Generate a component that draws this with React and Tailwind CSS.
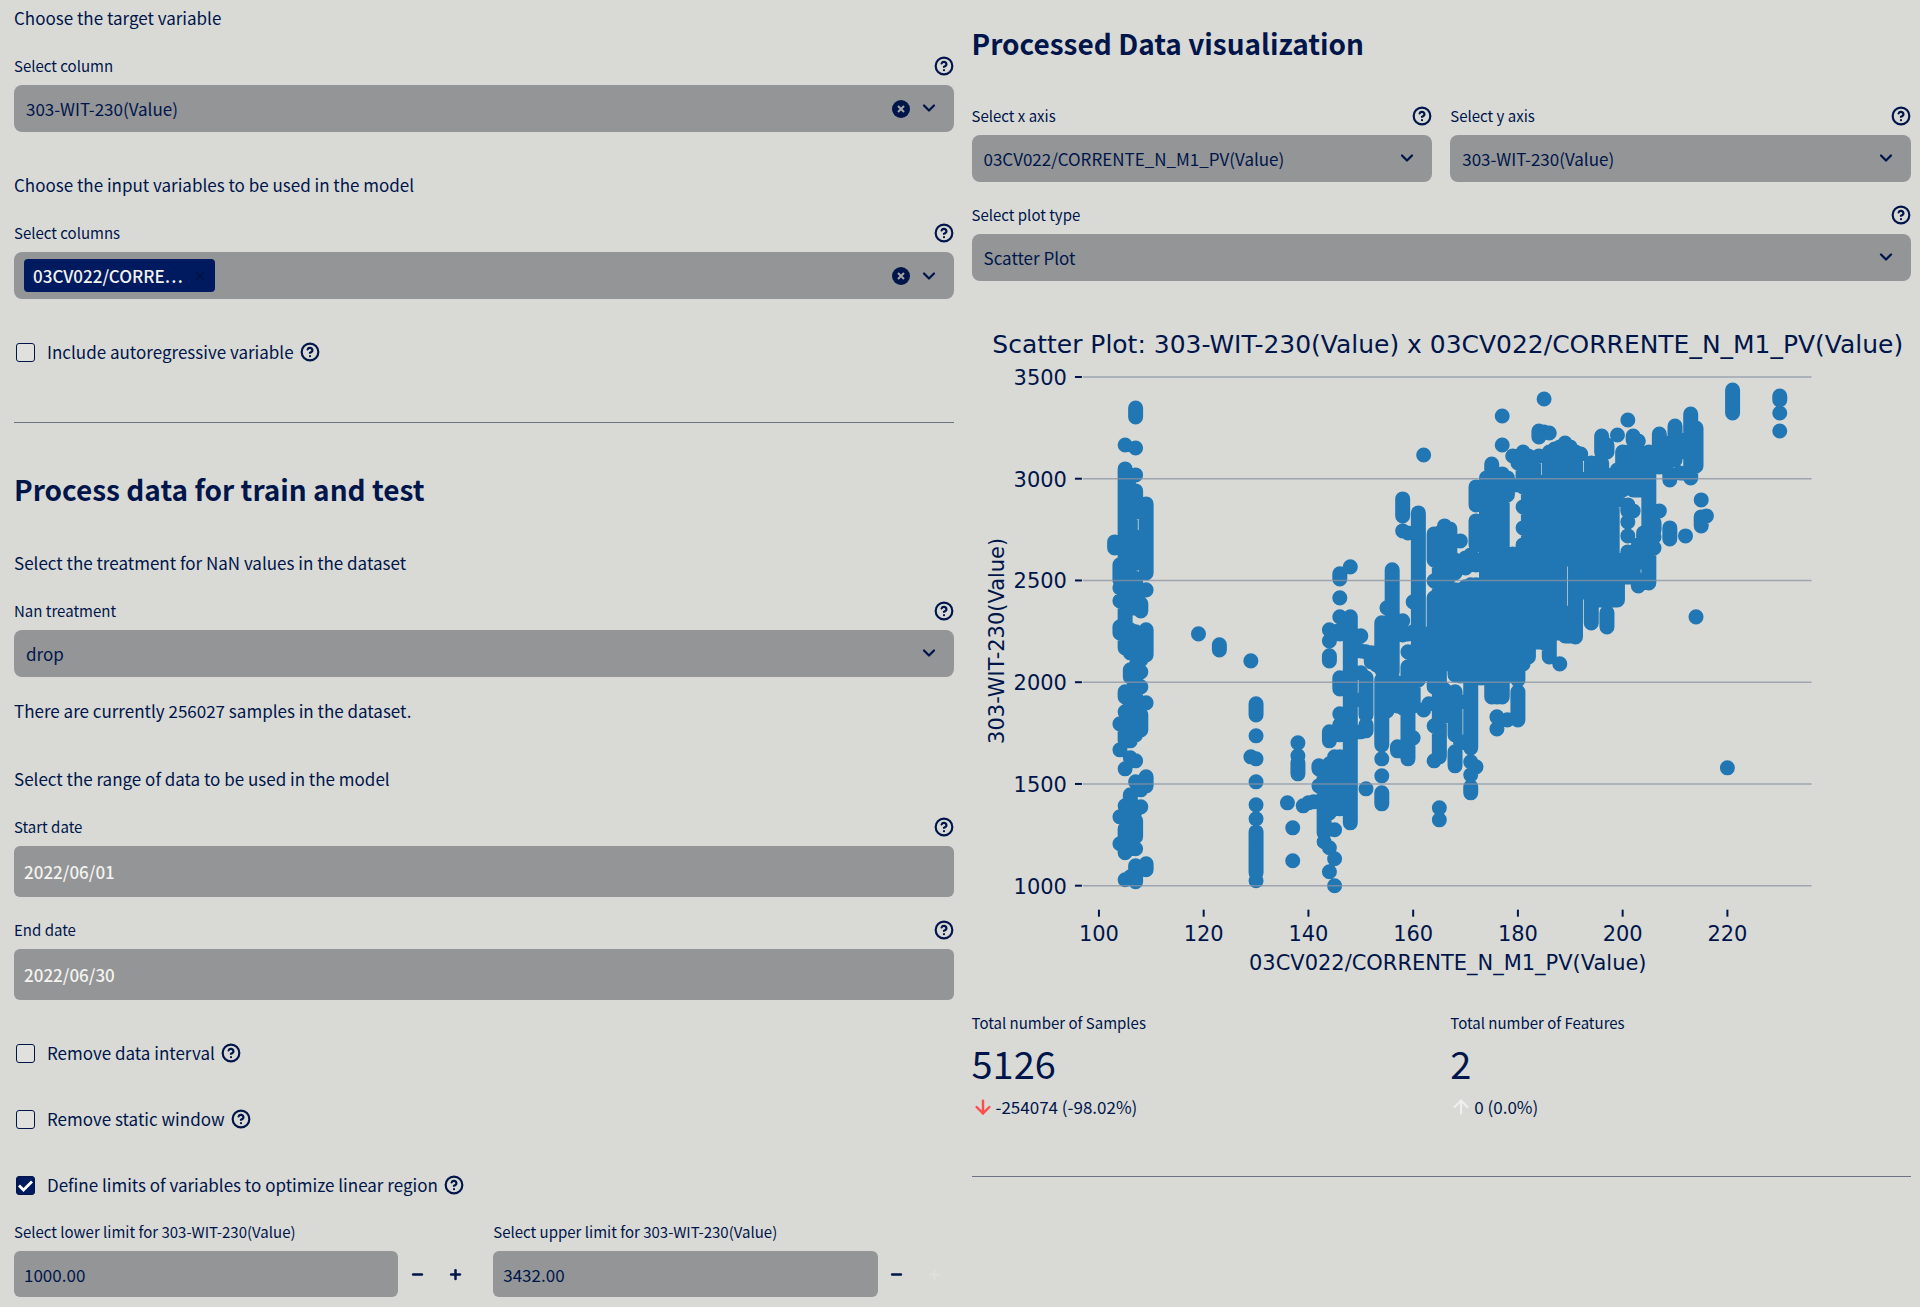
import React, { useId } from "react";
import { ArrowDown, ArrowUp, ChevronDown, CircleHelp, Minus, Plus, X } from "lucide-react";

const X_LABEL = "03CV022/CORRENTE_N_M1_PV(Value)";
const Y_LABEL = "303-WIT-230(Value)";

// Runs of overlapping markers: [x value, [top, bottom], ...] in drawing units.
const RUNS = [
  [103, [542, 548]],
  [104, [565, 580], [588, 588], [601, 601], [627, 633], [724, 724], [750, 750], [817, 817], [844, 844]],
  [105, [445, 445], [469, 648], [692, 697], [712, 712], [732, 741], [769, 769], [806, 806], [829, 839], [845, 853], [880, 880]],
  [106, [488, 608], [630, 653], [670, 677], [691, 741], [758, 758], [795, 840], [849, 849], [877, 877]],
  [107, [408, 417], [448, 448], [475, 475], [491, 512], [537, 563], [579, 582], [594, 608], [632, 656], [666, 687], [696, 735], [761, 761], [782, 782], [811, 811], [821, 837], [849, 849], [866, 882]],
  [108, [604, 611], [660, 660], [672, 672], [687, 687], [715, 730], [790, 790], [807, 807]],
  [109, [504, 573], [590, 590], [630, 655], [703, 703], [777, 786], [864, 870]],
  [119, [634, 634]],
  [123, [645, 650]],
  [129, [661, 661], [757, 757]],
  [130, [704, 715], [736, 736], [759, 759], [782, 782], [805, 805], [819, 819], [832, 873], [881, 881]],
  [136, [803, 803]],
  [137, [828, 828], [861, 861]],
  [138, [743, 743], [756, 756], [763, 774]],
  [139, [806, 806]],
  [140, [803, 803]],
  [141, [802, 802]],
  [142, [766, 769], [786, 786]],
  [143, [770, 833], [842, 842]],
  [144, [630, 630], [641, 641], [656, 661], [732, 741], [764, 813], [848, 848], [872, 872]],
  [145, [757, 808], [830, 830], [859, 859], [886, 886]],
  [146, [574, 579], [598, 598], [617, 617], [630, 634], [678, 689], [714, 714], [725, 735], [757, 809]],
  [147, [633, 633], [683, 689], [728, 734], [760, 807]],
  [148, [567, 567], [617, 823]],
  [149, [648, 648], [700, 700], [732, 732]],
  [150, [636, 636], [651, 651], [673, 673], [732, 732]],
  [151, [652, 652], [678, 715], [725, 731], [789, 789]],
  [152, [653, 662]],
  [153, [655, 665]],
  [154, [623, 670], [680, 745], [759, 759], [776, 776], [793, 804]],
  [155, [608, 608], [623, 711]],
  [156, [570, 672], [683, 705]],
  [157, [683, 706], [747, 751]],
  [158, [499, 516], [531, 531], [621, 621], [635, 635], [685, 708], [748, 751]],
  [159, [533, 533], [634, 634], [652, 652], [667, 675], [683, 759]],
  [160, [602, 602], [632, 632], [665, 675], [683, 706], [738, 738]],
  [161, [513, 680]],
  [162, [455, 455], [634, 674], [710, 710]],
  [163, [634, 672], [704, 704]],
  [164, [534, 560], [581, 581], [598, 687], [726, 726], [761, 761]],
  [165, [533, 757], [808, 808], [820, 820]],
  [166, [526, 585], [594, 664], [690, 706], [716, 716]],
  [167, [529, 555], [576, 576], [600, 664], [712, 712]],
  [168, [560, 560], [573, 573], [590, 675], [692, 735], [752, 766]],
  [169, [541, 541], [563, 563], [590, 676], [702, 702], [742, 742]],
  [170, [558, 568], [587, 676], [743, 743]],
  [171, [555, 555], [585, 748], [762, 762], [775, 775], [787, 793]],
  [172, [487, 505], [521, 545], [560, 565], [585, 678], [767, 767]],
  [173, [487, 503], [530, 545], [585, 678]],
  [174, [478, 678]],
  [175, [464, 697]],
  [176, [478, 697], [717, 717], [729, 729]],
  [177, [416, 416], [445, 445], [474, 697]],
  [178, [478, 495], [560, 675], [720, 720]],
  [179, [456, 456], [485, 485], [554, 676]],
  [180, [456, 463], [485, 485], [554, 680], [692, 720]],
  [181, [452, 487], [507, 507], [528, 528], [545, 664]],
  [182, [456, 657]],
  [183, [458, 642]],
  [184, [431, 437], [456, 456], [482, 642]],
  [185, [399, 399], [432, 432], [492, 643]],
  [186, [433, 433], [452, 657]],
  [187, [449, 633]],
  [188, [447, 633], [664, 664]],
  [189, [443, 559], [613, 636]],
  [190, [447, 559], [613, 636]],
  [191, [452, 637]],
  [192, [454, 454], [492, 592]],
  [193, [479, 592]],
  [194, [463, 623]],
  [195, [463, 600]],
  [196, [436, 452], [463, 600]],
  [197, [445, 452], [475, 600], [613, 627]],
  [198, [475, 600]],
  [199, [435, 435], [470, 500], [560, 600]],
  [200, [452, 490], [560, 577]],
  [201, [420, 420], [452, 488], [505, 511], [522, 522], [536, 536], [552, 577]],
  [202, [436, 440], [452, 490], [511, 511], [552, 577]],
  [203, [441, 441], [452, 490], [545, 562], [580, 586]],
  [204, [453, 490], [533, 562], [580, 580]],
  [205, [452, 583]],
  [206, [452, 467], [511, 511], [523, 530], [537, 537], [548, 548]],
  [207, [434, 467], [511, 511]],
  [208, [443, 467]],
  [209, [443, 452], [474, 480], [528, 539]],
  [210, [426, 460]],
  [211, [440, 452], [473, 473]],
  [212, [473, 473], [536, 536]],
  [213, [414, 478]],
  [214, [428, 466], [617, 617]],
  [215, [500, 500], [517, 526]],
  [216, [516, 516]],
  [220, [768, 768]],
  [221, [390, 413]],
  [230, [396, 400], [413, 413], [431, 431]],
];

const xPos = (value) => 1099 + (value - 100) * 5.24;
const yPos = (value) => 886 - (value - 1000) * 0.2036;
const MARKERS = RUNS.map(([x, ...runs]) =>
  runs.map(([top, bottom]) => `M${xPos(x).toFixed(1)} ${top}V${bottom + 0.1}`).join("")
).join("");

function HelpIcon({ about }) {
  return (
    <button type="button" aria-label={`Help: ${about}`} className="flex shrink-0">
      <CircleHelp size={20} strokeWidth={2.6} />
    </button>
  );
}

function FieldLabel({ htmlFor, children, help = true }) {
  return (
    <div className="mb-[5px] flex h-7 items-center justify-between">
      <label htmlFor={htmlFor} className="text-[15px]">{children}</label>
      {help && <HelpIcon about={children} />}
    </div>
  );
}

function ClearIcon() {
  return (
    <svg width="18" height="18" viewBox="0 0 18 18" aria-hidden="true">
      <circle cx="9" cy="9" r="9" fill="#00154a" />
      <path d="M6 6l6 6M12 6l-6 6" stroke="#a5a6a8" strokeWidth="2" />
    </svg>
  );
}

function SelectField({ label, value, clearable, className = "" }) {
  const id = useId();
  return (
    <div className={className}>
      <FieldLabel htmlFor={id}>{label}</FieldLabel>
      <div className="relative">
        <select id={id} defaultValue={value} className="h-[47px] w-full appearance-none rounded-lg bg-[#949597] pr-20 pl-3 text-[17px]">
          <option>{value}</option>
        </select>
        {clearable && (
          <button type="button" aria-label="Clear" className="absolute top-0 right-11 flex h-full items-center">
            <ClearIcon />
          </button>
        )}
        <ChevronDown size={20} strokeWidth={2.7} className="pointer-events-none absolute top-[13px] right-[15px]" />
      </div>
    </div>
  );
}

function DateField({ label, value, className = "" }) {
  const id = useId();
  return (
    <div className={className}>
      <FieldLabel htmlFor={id}>{label}</FieldLabel>
      <input id={id} type="text" defaultValue={value} className="block h-[51px] w-full rounded-md bg-[#949597] px-[10px] text-[17px] font-medium text-[#f3f3f0]" />
    </div>
  );
}

function CheckField({ label, checked = false, className = "" }) {
  const id = useId();
  return (
    <div className={`flex h-7 items-center ${className}`}>
      <div className="relative ml-[2px] flex">
        <input
          id={id}
          type="checkbox"
          defaultChecked={checked}
          className="peer size-[19px] appearance-none rounded-[3px] border border-[#00154a] bg-[#e0e0dd] checked:bg-[#001a60]"
        />
        <svg viewBox="0 0 19 19" aria-hidden="true" className="pointer-events-none absolute inset-0 hidden peer-checked:block">
          <path d="M3 9.5l4.5 4.5L16 5.5" fill="none" stroke="#fff" strokeWidth="2.8" />
        </svg>
      </div>
      <label htmlFor={id} className="mr-[6px] ml-3 text-[17px]">{label}</label>
      <HelpIcon about={label} />
    </div>
  );
}

function NumberField({ label, value, atMax }) {
  const id = useId();
  return (
    <div>
      <FieldLabel htmlFor={id} help={false}>{label}</FieldLabel>
      <div className="flex">
        <input id={id} type="text" inputMode="decimal" defaultValue={value} className="h-[46px] min-w-0 flex-1 rounded-md bg-[#949597] px-[10px] text-[17px]" />
        <button type="button" aria-label="Decrease" className="flex w-[38px] items-center justify-center">
          <Minus size={15} strokeWidth={4} />
        </button>
        <button type="button" aria-label="Increase" disabled={atMax} className="flex w-[38px] items-center justify-center disabled:text-[#dededb]">
          <Plus size={15} strokeWidth={4} />
        </button>
      </div>
    </div>
  );
}

function ScatterChart() {
  return (
    <svg viewBox="972 330 940 650" className="block w-full" role="img" aria-label="Scatter plot" fill="#00154a" fontFamily="'DejaVu Sans', sans-serif">
      <text x="1448" y="353" fontSize="25" textAnchor="middle">{`Scatter Plot: ${Y_LABEL} x ${X_LABEL}`}</text>
      <path d={MARKERS} fill="none" stroke="#2077b4" strokeWidth="15" strokeLinecap="round" />
      {[3500, 3000, 2500, 2000, 1500, 1000].map((v) => (
        <g key={v}>
          <path d={`M1083 ${yPos(v)}H1812`} stroke="#8a93a3" strokeWidth="1.6" strokeOpacity="0.75" />
          <path d={`M1075 ${yPos(v)}h7`} stroke="#00154a" strokeWidth="2" />
          <text x="1067" y={yPos(v) + 8} fontSize="21" textAnchor="end">{v}</text>
        </g>
      ))}
      {[100, 120, 140, 160, 180, 200, 220].map((v) => (
        <g key={v}>
          <path d={`M${xPos(v)} 910v7`} stroke="#00154a" strokeWidth="2" />
          <text x={xPos(v)} y="941" fontSize="21" textAnchor="middle">{v}</text>
        </g>
      ))}
      <text x="1448" y="970" fontSize="21" textAnchor="middle">{X_LABEL}</text>
      <text x="1004" y="641" fontSize="21" textAnchor="middle" transform="rotate(-90 1004 641)">{Y_LABEL}</text>
    </svg>
  );
}

function Metric({ label, value, delta, icon }) {
  return (
    <div>
      <div className="h-7 text-[15px] leading-7">{label}</div>
      <div className="text-[38px] leading-[52px]">{value}</div>
      <div className="mt-1 flex h-7 items-center gap-[2px] text-[17px]">
        {icon}
        <span>{delta}</span>
      </div>
    </div>
  );
}

export default function App() {
  return (
    <main className="grid min-h-screen grid-cols-2 items-start gap-[18px] bg-[#d9dad6] pt-1 pr-[9px] pl-[14px] font-['Noto_Sans_CJK_SC',sans-serif] text-[17px] leading-7 text-[#00154a]">
      <section>
        <p>Choose the target variable</p>
        <SelectField label="Select column" value={Y_LABEL} clearable className="mt-5" />

        <p className="mt-[39px]">Choose the input variables to be used in the model</p>
        <div className="mt-5">
          <FieldLabel htmlFor="input-columns">Select columns</FieldLabel>
          <div className="flex h-[47px] items-center rounded-lg bg-[#949597] pr-[15px] pl-[10px]">
            <span className="flex h-[33px] w-[191px] items-center justify-between rounded bg-[#001a60] pr-2 pl-[9px] font-medium text-[#f3f3f0]">
              03CV022/CORRE…
              <button type="button" aria-label="Remove 03CV022/CORRENTE_N_M1_PV(Value)" className="text-[#000e3a]">
                <X size={14} strokeWidth={2} />
              </button>
            </span>
            <input id="input-columns" type="text" className="min-w-0 flex-1" />
            <button type="button" aria-label="Clear all" className="mr-[9px]">
              <ClearIcon />
            </button>
            <button type="button" aria-label="Open options">
              <ChevronDown size={20} strokeWidth={2.7} />
            </button>
          </div>
        </div>
        <CheckField label="Include autoregressive variable" className="mt-[39px]" />

        <hr className="mt-14 border-[#6c7382]" />

        <h3 className="mt-[43px] text-[28px] leading-[46px] font-semibold">Process data for train and test</h3>
        <p className="mt-[37px]">Select the treatment for NaN values in the dataset</p>
        <SelectField label="Nan treatment" value="drop" className="mt-5" />
        <p className="mt-5">There are currently 256027 samples in the dataset.</p>
        <p className="mt-10">Select the range of data to be used in the model</p>
        <DateField label="Start date" value="2022/06/01" className="mt-5" />
        <DateField label="End date" value="2022/06/30" className="mt-[19px]" />
        <CheckField label="Remove data interval" className="mt-[39px]" />
        <CheckField label="Remove static window" className="mt-[38px]" />
        <CheckField label="Define limits of variables to optimize linear region" checked className="mt-[38px]" />
        <div className="mt-[19px] grid grid-cols-2 gap-[19px]">
          <NumberField label="Select lower limit for 303-WIT-230(Value)" value="1000.00" />
          <NumberField label="Select upper limit for 303-WIT-230(Value)" value="3432.00" atMax />
        </div>
      </section>

      <section>
        <h3 className="mt-4 text-[28px] leading-[46px] font-semibold">Processed Data visualization</h3>
        <div className="mt-9 grid grid-cols-2 gap-[18px]">
          <SelectField label="Select x axis" value={X_LABEL} />
          <SelectField label="Select y axis" value={Y_LABEL} />
        </div>
        <SelectField label="Select plot type" value="Scatter Plot" className="mt-[19px]" />
        <div className="mt-[49px]">
          <ScatterChart />
        </div>
        <div className="mt-[29px] grid grid-cols-2 gap-[18px]">
          <Metric label="Total number of Samples" value="5126" delta="-254074 (-98.02%)" icon={<ArrowDown size={22} strokeWidth={2.6} className="text-[#ff4b4b]" />} />
          <Metric label="Total number of Features" value="2" delta="0 (0.0%)" icon={<ArrowUp size={22} strokeWidth={2.2} className="text-[#f0f0ee]" />} />
        </div>
        <hr className="mt-[55px] border-[#6c7382]" />
      </section>
    </main>
  );
}
